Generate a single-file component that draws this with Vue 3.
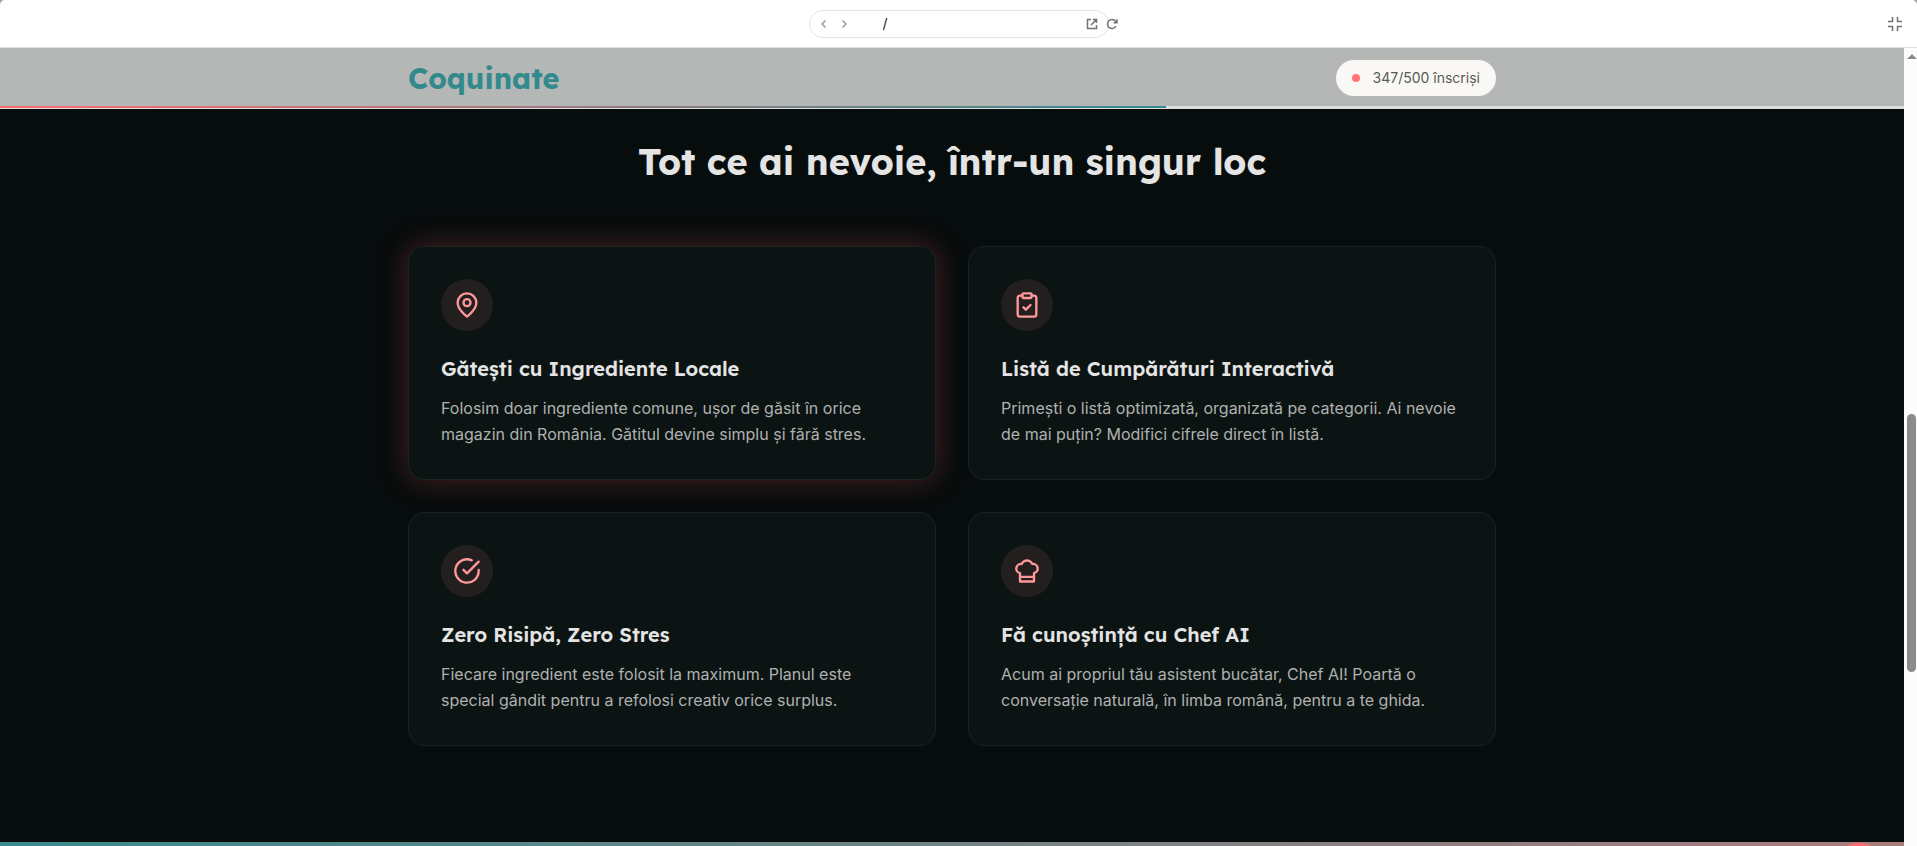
<script setup>
import { ref } from 'vue'

const address = ref('/')
const enrolled = 347
const capacity = 500
const scrollProgress = 61.25

const features = [
  {
    icon: 'pin',
    title: 'Gătești cu Ingrediente Locale',
    lines: ['Folosim doar ingrediente comune, ușor de găsit în orice', 'magazin din România. Gătitul devine simplu și fără stres.'],
    active: true
  },
  {
    icon: 'list',
    title: 'Listă de Cumpărături Interactivă',
    lines: ['Primești o listă optimizată, organizată pe categorii. Ai nevoie', 'de mai puțin? Modifici cifrele direct în listă.']
  },
  {
    icon: 'check',
    title: 'Zero Risipă, Zero Stres',
    lines: ['Fiecare ingredient este folosit la maximum. Planul este', 'special gândit pentru a refolosi creativ orice surplus.']
  },
  {
    icon: 'chef',
    title: 'Fă cunoștință cu Chef AI',
    lines: ['Acum ai propriul tău asistent bucătar, Chef AI! Poartă o', 'conversație naturală, în limba română, pentru a te ghida.']
  }
]
</script>

<template>
  <div class="window">
    <div class="toolbar">
      <div class="address">
        <button class="tool nav" type="button" aria-label="Back">
          <svg width="8" height="10" viewBox="0 0 8 10"><path d="M5.5 1.5 2 5l3.5 3.5" /></svg>
        </button>
        <button class="tool nav" type="button" aria-label="Forward">
          <svg width="8" height="10" viewBox="0 0 8 10"><path d="M2.5 1.5 6 5 2.5 8.5" /></svg>
        </button>
        <input v-model="address" class="path" type="text" aria-label="Address" />
        <button class="tool" type="button" aria-label="Open in new tab">
          <svg width="12" height="12" viewBox="0 0 12 12"><path d="M5 1.5H1.5V10.5H10.5V7M7 1.5H10.5V5M10.5 1.5 5 7" /></svg>
        </button>
        <button class="tool reload" type="button" aria-label="Reload">
          <svg width="12" height="12" viewBox="0 0 12 12"><path d="M10 8A4.5 4.5 0 1 1 9.5 3.2L11 4.7M11 1.2V4.7H7.5" /></svg>
        </button>
      </div>
      <button class="tool collapse" type="button" aria-label="Exit full screen">
        <svg width="14" height="14" viewBox="0 0 14 14"><path d="M0 4.5H4.5V0M9.5 0V4.5H14M0 9.5H4.5V14M9.5 14V9.5H14" /></svg>
      </button>
    </div>

    <div class="viewport">
      <div class="page">
        <header class="header">
          <div class="container header-row">
            <a class="logo" href="#">Coquinate</a>
            <div class="counter"><span class="dot"></span>{{ enrolled }}/{{ capacity }} înscriși</div>
          </div>
          <div class="progress"><div class="progress-fill" :style="{ width: scrollProgress + '%' }"></div></div>
        </header>

        <main class="features">
          <div class="container">
            <h2>Tot ce ai nevoie, într-un singur loc</h2>
            <div class="grid">
              <article v-for="f in features" :key="f.title" class="card" :class="{ active: f.active }">
                <div class="badge">
                  <svg width="28" height="28" viewBox="0 0 24 24" aria-hidden="true">
                    <template v-if="f.icon === 'pin'">
                      <path d="M20 10c0 6-8 12-8 12s-8-6-8-12a8 8 0 0 1 16 0Z" />
                      <circle cx="12" cy="10" r="3" />
                    </template>
                    <template v-else-if="f.icon === 'list'">
                      <rect x="8" y="2" width="8" height="4" rx="1" />
                      <path d="M16 4h2a2 2 0 0 1 2 2v14a2 2 0 0 1-2 2H6a2 2 0 0 1-2-2V6a2 2 0 0 1 2-2h2" />
                      <path d="m9 14 2 2 4-4" />
                    </template>
                    <template v-else-if="f.icon === 'check'">
                      <path d="M22 11.08V12a10 10 0 1 1-5.93-9.14" />
                      <path d="m9 11 3 3L22 4" />
                    </template>
                    <template v-else>
                      <path d="M6 13.87A4 4 0 0 1 7.41 6a5.11 5.11 0 0 1 1.05-1.54 5 5 0 0 1 7.08 0A5.11 5.11 0 0 1 16.59 6 4 4 0 0 1 18 13.87V21H6Z" />
                      <path d="M6 17h12" />
                    </template>
                  </svg>
                </div>
                <h3>{{ f.title }}</h3>
                <p><template v-for="(line, i) in f.lines" :key="line"><br v-if="i" />{{ line }}</template></p>
              </article>
            </div>
          </div>
        </main>

        <section class="next"><button class="fab" type="button" aria-label="Chat"></button></section>
      </div>

      <div class="scrollbar" aria-hidden="true">
        <span class="arrow"></span>
        <span class="thumb"></span>
      </div>
    </div>
  </div>
</template>

<style>
body {
  margin: 0;
  background: #a0a0a0;
}
</style>

<style scoped>
* {
  box-sizing: border-box;
}
.window {
  display: flex;
  flex-direction: column;
  height: 100vh;
  overflow: hidden;
  font-family: Inter, 'Liberation Sans', sans-serif;
}
.toolbar {
  position: relative;
  display: flex;
  flex: none;
  align-items: center;
  justify-content: center;
  height: 48px;
  background: #fff;
  border-bottom: 1px solid #dfe1e0;
  border-radius: 5px 5px 0 0;
}
.address {
  position: relative;
  display: flex;
  align-items: center;
  width: 300px;
  height: 28px;
  padding: 0 8px 0 4px;
  border: 1px solid #e4e4e7;
  border-radius: 14px;
}
.tool {
  display: flex;
  flex: none;
  align-items: center;
  justify-content: center;
  width: 16px;
  height: 20px;
  padding: 0;
  border: 0;
  background: none;
  color: #71717a;
}
.tool svg {
  fill: none;
  stroke: currentColor;
  stroke-width: 1.5;
}
.nav {
  width: 20px;
  color: #9b9ba3;
}
.path {
  flex: 1;
  min-width: 0;
  height: 24px;
  padding: 0 0 0 29px;
  border: 0;
  outline: 0;
  background: none;
  font: 14px Inter, sans-serif;
  color: #18181b;
}
.reload {
  position: absolute;
  right: -12px;
}
.collapse {
  position: absolute;
  right: 14px;
}
.viewport {
  display: flex;
  flex: 1;
  min-height: 0;
}
.page {
  display: flex;
  flex: 1;
  flex-direction: column;
  min-width: 0;
  overflow: hidden;
  background: #070c0c;
}
.container {
  width: 100%;
  max-width: 1152px;
  margin: 0 auto;
  padding: 0 32px;
}
.header {
  flex: none;
  background: #b4b7b5;
  border-bottom: 1px solid #dbdedd;
}
.header-row {
  display: flex;
  align-items: center;
  justify-content: space-between;
  height: 60px;
}
.logo {
  font-family: Lexend, Inter, sans-serif;
  font-size: 29px;
  line-height: 36px;
  font-weight: 700;
  color: #338a8d;
  text-decoration: none;
}
.counter {
  display: flex;
  align-items: center;
  gap: 13px;
  height: 36px;
  padding: 0 16px;
  border-radius: 18px;
  background: #faf8f4;
  font-size: 14px;
  line-height: 20px;
  color: #585858;
}
.dot {
  width: 8px;
  height: 8px;
  border-radius: 50%;
  background: #ff7377;
}
.progress {
  height: 2px;
  margin-top: -2px;
  background: #dbdedd;
}
.progress-fill {
  height: 2px;
  background: linear-gradient(90deg, #ff6b70, #338a8d);
}
.features {
  flex: none;
  padding: 33px 0 96px;
}
h2 {
  margin: 0 0 64px;
  font-family: Lexend, Inter, sans-serif;
  font-size: 36px;
  line-height: 40px;
  font-weight: 700;
  text-align: center;
  color: #e4e4e4;
}
.grid {
  display: grid;
  grid-template-columns: 1fr 1fr;
  gap: 32px;
}
.card {
  padding: 32px;
  border: 1px solid #1a2221;
  border-radius: 16px;
  background: #0c1413;
}
.active {
  border-color: #192423;
  box-shadow: 0 0 30px rgba(250, 90, 105, 0.28);
}
.badge {
  display: flex;
  align-items: center;
  justify-content: center;
  width: 52px;
  height: 52px;
  margin-bottom: 24px;
  border-radius: 50%;
  background: #241f1f;
}
.badge svg {
  fill: none;
  stroke: #ff9999;
  stroke-width: 2;
  stroke-linecap: round;
  stroke-linejoin: round;
}
h3 {
  margin: 0 0 12px;
  font-family: Lexend, Inter, sans-serif;
  font-size: 20px;
  line-height: 28px;
  font-weight: 600;
  color: #e4e4e4;
}
p {
  margin: 0;
  font-size: 16px;
  line-height: 26px;
  color: #afb1b0;
}
.next {
  position: relative;
  flex: 1;
  background: linear-gradient(90deg, #388a8d, #ab7c7e);
}
.fab {
  position: absolute;
  top: 1px;
  right: 17px;
  width: 56px;
  height: 56px;
  padding: 0;
  border: 0;
  border-radius: 50%;
  background: #ff6b70;
}
.scrollbar {
  position: relative;
  flex: none;
  width: 13px;
  background: #fcfcfc;
}
.arrow {
  position: absolute;
  top: 6px;
  left: 3px;
  border: 5px solid transparent;
  border-top: 0;
  border-bottom-color: #8b8b8b;
}
.thumb {
  position: absolute;
  top: 45.9%;
  left: 3px;
  width: 9px;
  height: 32.3%;
  border-radius: 5px;
  background: #8b8b8b;
}
</style>
